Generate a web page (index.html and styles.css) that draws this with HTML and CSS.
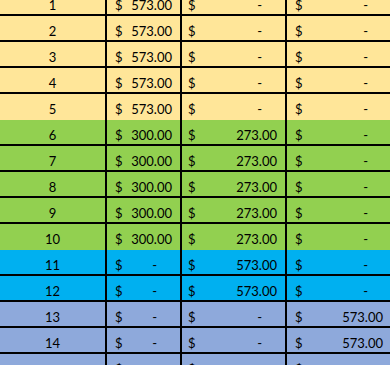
FILE: index.html
```html
<!DOCTYPE html>
<html>
<head>
<meta charset="utf-8">
<link rel="stylesheet" href="styles.css">
</head>
<body>
<div class="sheet">
  <div class="row yellow first"><div class="c num">1</div><div class="c money b"><span>$</span><span>573.00</span></div><div class="c money cc"><span>$</span><span class="dash">-</span></div><div class="c money d"><span>$</span><span class="dash">-</span></div></div>
  <div class="row yellow"><div class="c num">2</div><div class="c money b"><span>$</span><span>573.00</span></div><div class="c money cc"><span>$</span><span class="dash">-</span></div><div class="c money d"><span>$</span><span class="dash">-</span></div></div>
  <div class="row yellow"><div class="c num">3</div><div class="c money b"><span>$</span><span>573.00</span></div><div class="c money cc"><span>$</span><span class="dash">-</span></div><div class="c money d"><span>$</span><span class="dash">-</span></div></div>
  <div class="row yellow"><div class="c num">4</div><div class="c money b"><span>$</span><span>573.00</span></div><div class="c money cc"><span>$</span><span class="dash">-</span></div><div class="c money d"><span>$</span><span class="dash">-</span></div></div>
  <div class="row yellow open"><div class="c num">5</div><div class="c money b"><span>$</span><span>573.00</span></div><div class="c money cc"><span>$</span><span class="dash">-</span></div><div class="c money d"><span>$</span><span class="dash">-</span></div></div>
  <div class="row green"><div class="c num">6</div><div class="c money b"><span>$</span><span>300.00</span></div><div class="c money cc"><span>$</span><span>273.00</span></div><div class="c money d"><span>$</span><span class="dash">-</span></div></div>
  <div class="row green"><div class="c num">7</div><div class="c money b"><span>$</span><span>300.00</span></div><div class="c money cc"><span>$</span><span>273.00</span></div><div class="c money d"><span>$</span><span class="dash">-</span></div></div>
  <div class="row green"><div class="c num">8</div><div class="c money b"><span>$</span><span>300.00</span></div><div class="c money cc"><span>$</span><span>273.00</span></div><div class="c money d"><span>$</span><span class="dash">-</span></div></div>
  <div class="row green"><div class="c num">9</div><div class="c money b"><span>$</span><span>300.00</span></div><div class="c money cc"><span>$</span><span>273.00</span></div><div class="c money d"><span>$</span><span class="dash">-</span></div></div>
  <div class="row green open"><div class="c num">10</div><div class="c money b"><span>$</span><span>300.00</span></div><div class="c money cc"><span>$</span><span>273.00</span></div><div class="c money d"><span>$</span><span class="dash">-</span></div></div>
  <div class="row blue"><div class="c num">11</div><div class="c money b"><span>$</span><span class="dash">-</span></div><div class="c money cc"><span>$</span><span>573.00</span></div><div class="c money d"><span>$</span><span class="dash">-</span></div></div>
  <div class="row blue"><div class="c num">12</div><div class="c money b"><span>$</span><span class="dash">-</span></div><div class="c money cc"><span>$</span><span>573.00</span></div><div class="c money d"><span>$</span><span class="dash">-</span></div></div>
  <div class="row lavender"><div class="c num">13</div><div class="c money b"><span>$</span><span class="dash">-</span></div><div class="c money cc"><span>$</span><span class="dash">-</span></div><div class="c money d"><span>$</span><span>573.00</span></div></div>
  <div class="row lavender"><div class="c num">14</div><div class="c money b"><span>$</span><span class="dash">-</span></div><div class="c money cc"><span>$</span><span class="dash">-</span></div><div class="c money d"><span>$</span><span>573.00</span></div></div>
  <div class="row lavender last"><div class="c num"></div><div class="c money b"><span>$</span><span></span></div><div class="c money cc"><span>$</span><span></span></div><div class="c money d"><span>$</span><span></span></div></div>
</div>
</body>
</html>
```

FILE: styles.css
```css
html, body {
  margin: 0;
  padding: 0;
  background: #ffffff;
  overflow: hidden;
}

.sheet {
  font-family: Lato, "Liberation Sans", sans-serif;
  font-size: 13px;
  color: #000;
}

.row {
  display: grid;
  grid-template-columns: 107px 75px 105px 1fr;
  height: 26px;
  box-sizing: border-box;
  border-bottom: 2px solid #000;
}

.row.open {
  border-bottom: none;
}

.row.first {
  height: 16px;
}

.yellow { background: #ffe699; }
.green { background: #92d050; }
.blue { background: #00b0f0; }
.lavender { background: #8ea9db; }

.c {
  box-sizing: border-box;
  border-right: 2px solid #000;
  height: 24px;
  display: flex;
  align-items: flex-end;
  line-height: 16px;
  padding-bottom: 1px;
}

.row.open .c {
  height: 26px;
  padding-bottom: 3px;
}

.row.first .c {
  height: 14px;
  line-height: 10px;
  padding-bottom: 4px;
}

/* last, partly visible row: only the tops of the "$" signs show */
.row.last .c {
  align-items: flex-start;
  padding-top: 7px;
  line-height: 16px;
}

.c:last-child {
  border-right: none;
}

.num {
  justify-content: center;
}

.money {
  justify-content: space-between;
}

.money.b { padding-left: 8px; padding-right: 8px; }
.money.cc { padding-left: 6px; padding-right: 8px; }
.money.d { padding-left: 8px; padding-right: 7px; }

.dash {
  padding-right: 15px;
}
```
